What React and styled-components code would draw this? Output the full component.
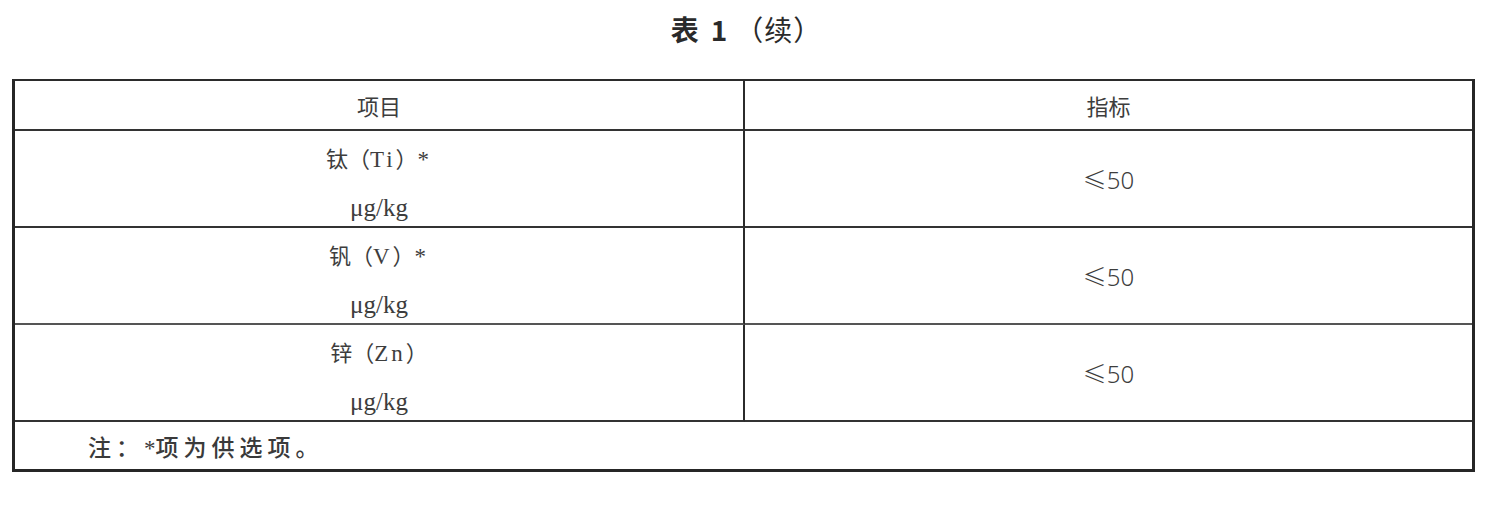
import styled, { createGlobalStyle } from 'styled-components';

const GlobalStyle = createGlobalStyle`
  html, body {
    margin: 0;
    padding: 0;
    background: #ffffff;
  }
  body {
    font-family: "Noto Sans CJK SC", "Liberation Serif", serif;
    color: #3a3a3a;
  }
`;

const Page = styled.div`
  width: 1500px;
  height: 508px;
  padding: 0 25px 0 12px;
  box-sizing: border-box;
`;

const Caption = styled.div`
  height: 79px;
  display: flex;
  justify-content: center;
  align-items: flex-start;
  padding-top: 11px;
  box-sizing: border-box;
  padding-left: 6px;
  font-size: 28px;
  line-height: 36px;
  font-weight: 700;
  color: #2a2a2a;
`;

const Num = styled.span`
  margin: 0 8px 0 12px;
`;

const Paren = styled.span`
  font-weight: 400;
  letter-spacing: 1px;
`;

const Table = styled.table`
  width: 1463px;
  border-collapse: separate;
  border-spacing: 0;
  border-top: 2px solid #2b2b2b;
  border-left: 3px solid #262626;
  border-right: 3px solid #262626;
  border-bottom: 3px solid #262626;
  table-layout: fixed;
`;

const Cell = styled.td`
  padding: 0;
  text-align: center;
  vertical-align: ${(p) => (p.$top ? 'top' : 'middle')};
  border-bottom: ${(p) => `2px solid ${p.$light ? '#555' : '#333'}`};
  border-right: ${(p) => (p.$left ? '2px solid #2b2b2b' : 'none')};
  height: ${(p) => p.$h}px;
  font-size: 22px;
  color: #3d3d3d;
`;

const Line = styled.div`
  height: 40px;
  line-height: 40px;
  margin-top: ${(p) => (p.$second ? 9 : 6)}px;
  white-space: pre;
`;

const Latin = styled.span`
  font-family: "Liberation Serif", serif;
  font-size: 23px;
  letter-spacing: 3px;
`;

const Unit = styled.span`
  font-family: "Liberation Serif", serif;
  font-size: 25px;
`;

const Value = styled.span`
  font-family: "Noto Sans", "Noto Sans CJK SC", sans-serif;
  font-weight: 300;
  font-size: 24px;
  color: #3d3d3d;
`;

const NoteCell = styled.td`
  padding: 0 0 0 73px;
  text-align: left;
  vertical-align: middle;
  height: 47px;
  font-size: 23px;
  font-weight: 500;
  color: #3a3a3a;
  letter-spacing: 5px;
`;

const Star = styled.span`
  font-family: "Liberation Serif", serif;
  letter-spacing: 0;
`;

const rows = [
  { name: '钛', sym: 'Ti', star: true, value: '≤50' },
  { name: '钒', sym: 'V', star: true, value: '≤50' },
  { name: '锌', sym: 'Zn', star: false, value: '≤50' },
];

export default function App() {
  return (
    <Page>
      <GlobalStyle />
      <Caption>
        表<Num>1</Num>
        <Paren>（续）</Paren>
      </Caption>
      <Table>
        <colgroup>
          <col style={{ width: 730 }} />
          <col />
        </colgroup>
        <tbody>
          <tr>
            <Cell $left $h={48}>项目</Cell>
            <Cell $h={48}>指标</Cell>
          </tr>
          {rows.map((r, i) => (
            <tr key={r.sym}>
              <Cell $left $top $h={95} $light={i === 1}>
                <Line>
                  {r.name}（<Latin>{r.sym}</Latin>）{r.star ? <Latin>*</Latin> : null}
                </Line>
                <Line $second>
                  <Unit>μg/kg</Unit>
                </Line>
              </Cell>
              <Cell $h={95} $light={i === 1}>
                <Value>{r.value}</Value>
              </Cell>
            </tr>
          ))}
          <tr>
            <NoteCell colSpan={2}>
              注：<Star>*</Star>项为供选项。
            </NoteCell>
          </tr>
        </tbody>
      </Table>
    </Page>
  );
}
